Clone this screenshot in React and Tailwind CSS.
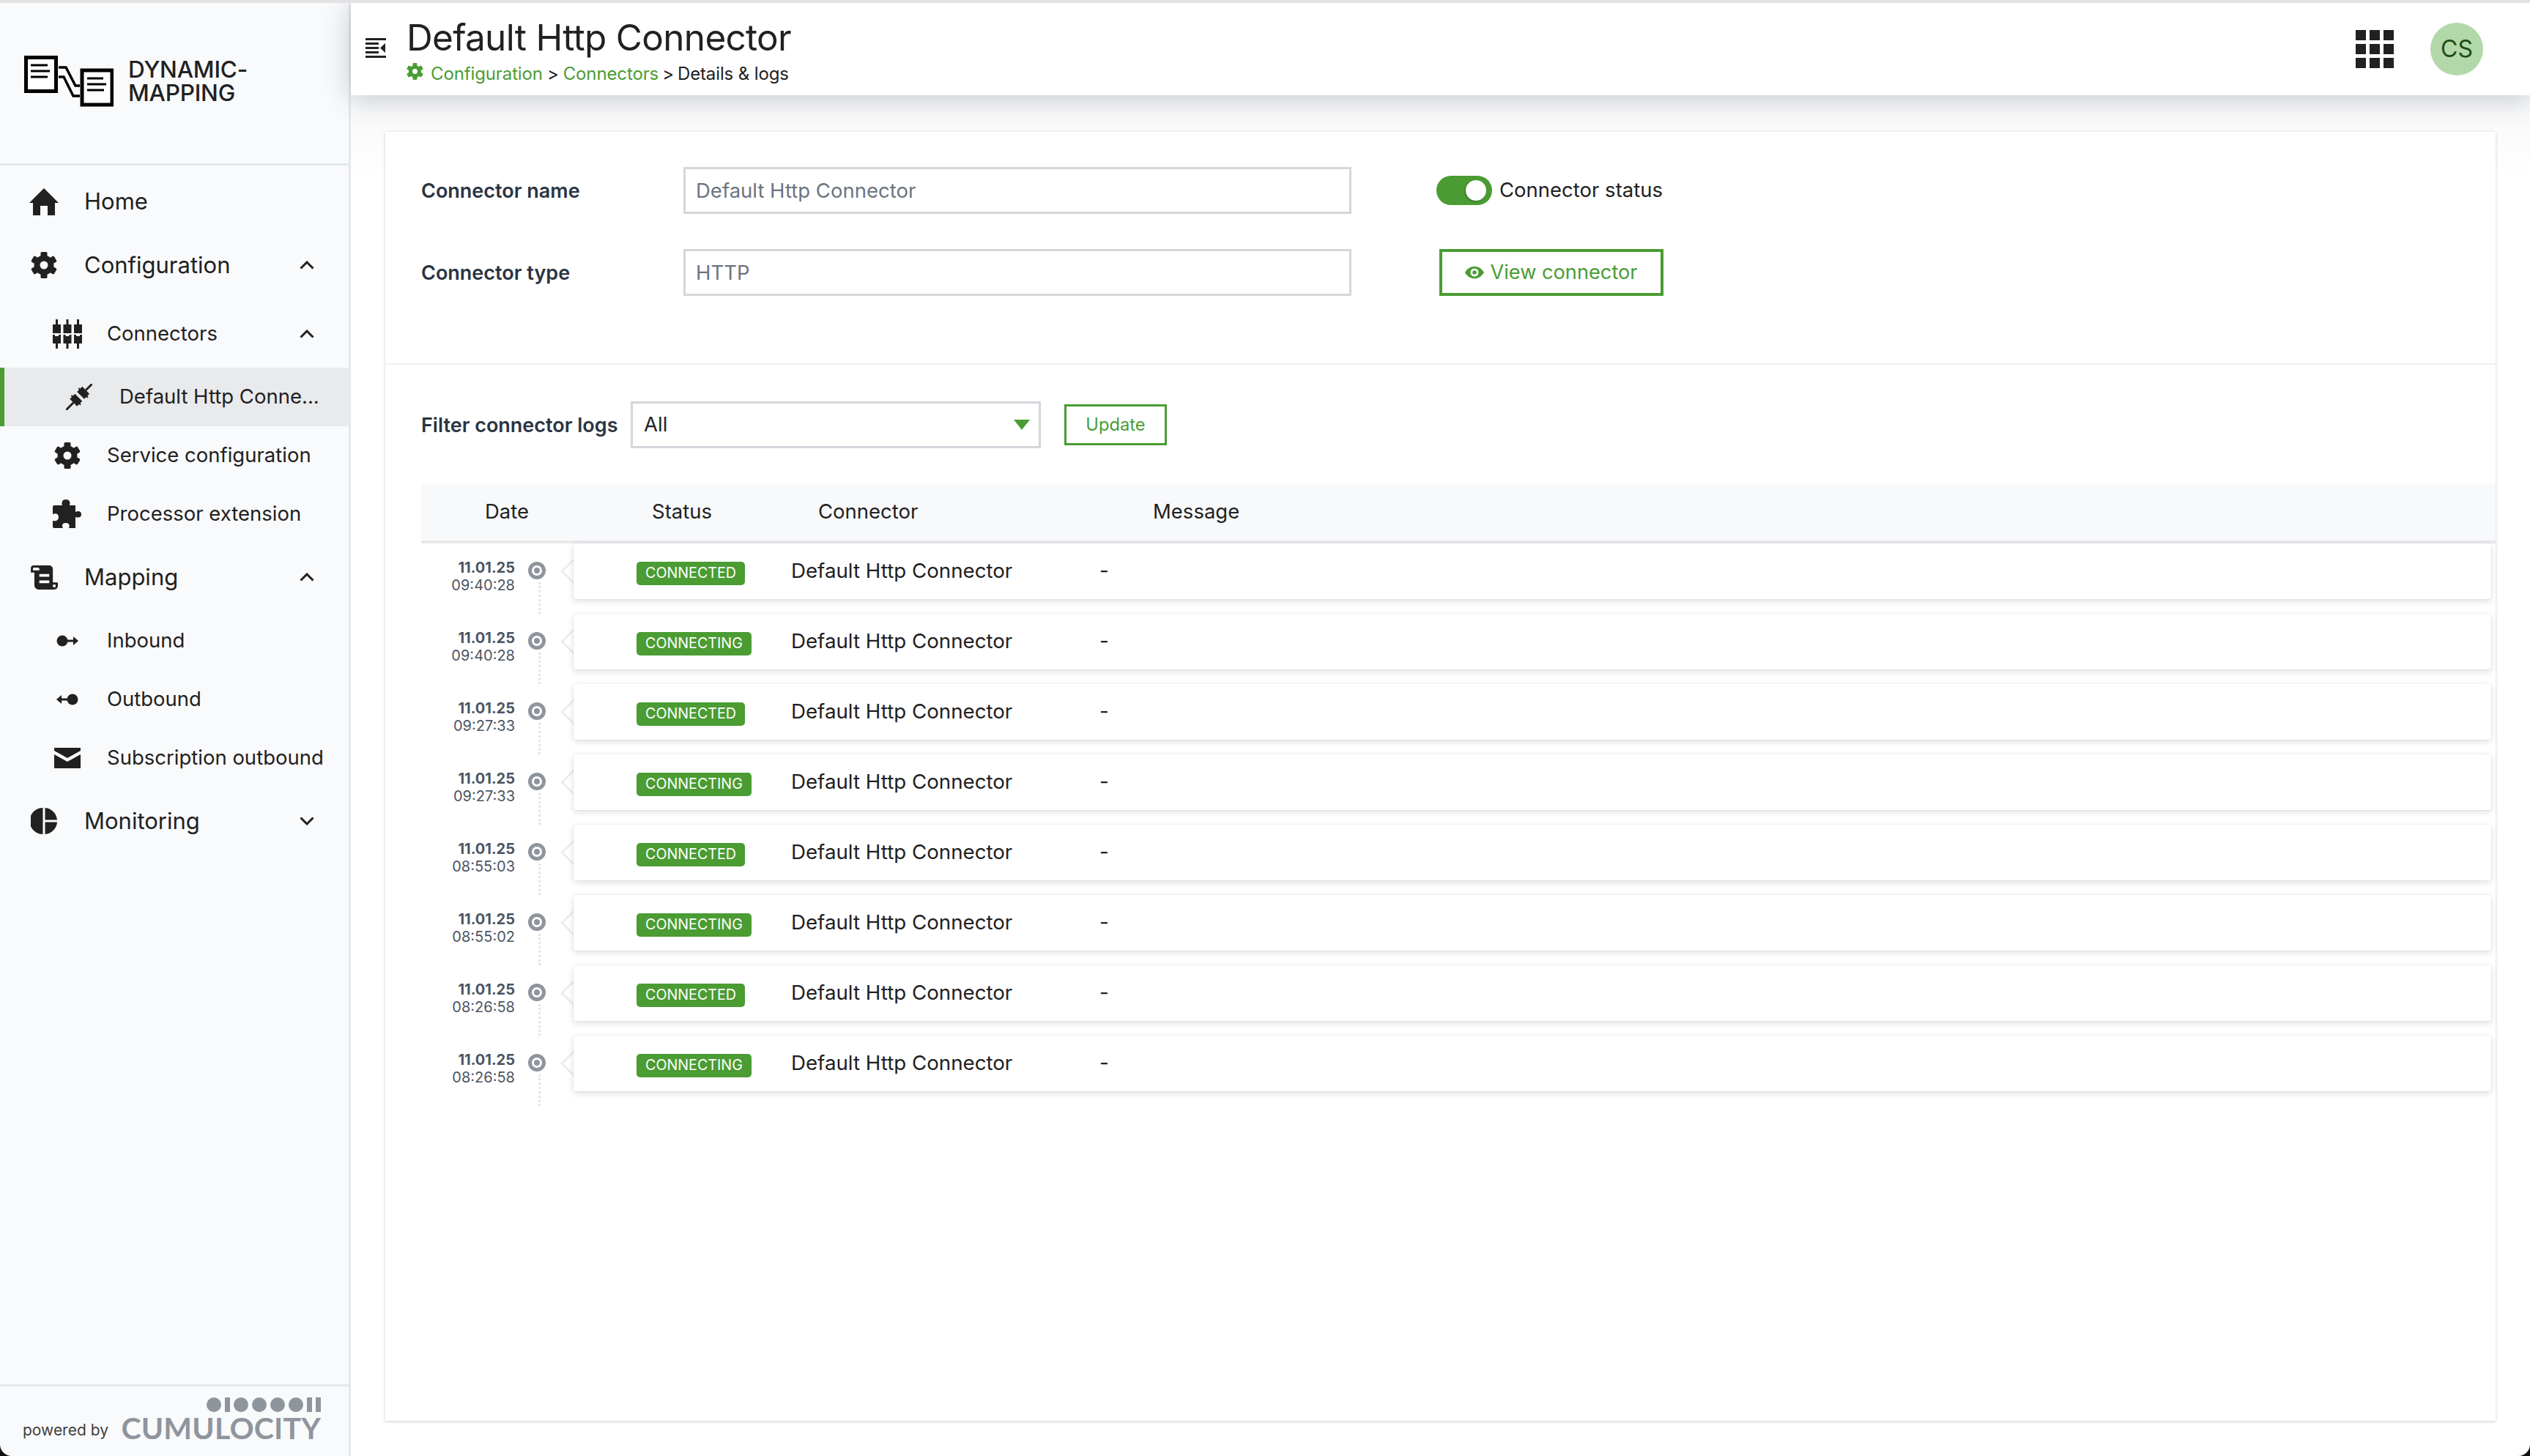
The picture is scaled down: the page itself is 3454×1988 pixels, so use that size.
function Gear({ className }) {
  return (
    <svg viewBox="0 0 36 36" className={className} fill="currentColor">
      <circle cx="18" cy="18" r="9.5" fill="none" stroke="currentColor" strokeWidth="8" />
      {[0, 60, 120, 180, 240, 300].map((a) => (
        <rect key={a} x="13.5" y="0" width="9" height="8" rx="1.5" transform={`rotate(${a} 18 18)`} />
      ))}
    </svg>
  );
}
function Home({ className }) {
  return (
    <svg viewBox="0 0 40 37" className={className} fill="currentColor">
      <path d="M20 0 L40 20 H35 V37 H25 V24 H15 V37 H5 V20 H0 Z" />
    </svg>
  );
}
function Chevron({ up }) {
  return (
    <svg viewBox="0 0 20 12" className="w-[20px] h-[12px] shrink-0" fill="none" stroke="#212121" strokeWidth="3">
      <path d={up ? "M1.5 10.5 L10 2 L18.5 10.5" : "M1.5 1.5 L10 10 L18.5 1.5"} />
    </svg>
  );
}
function Connectors({ className }) {
  return (
    <svg viewBox="0 0 40 40" className={className} fill="currentColor">
      {[0, 14.5, 29].map((x) => (
        <g key={x} transform={`translate(${x} 0)`}>
          <rect x="4" y="0" width="3" height="8" />
          <rect x="0" y="7" width="11" height="12" />
          <path d="M0 21 H3 V23 H8 V21 H11 V33 H0 Z" />
          <rect x="4" y="32" width="3" height="8" />
        </g>
      ))}
    </svg>
  );
}
function Plug({ className }) {
  return (
    <svg viewBox="0 0 36 36" className={className} fill="currentColor">
      <g transform="rotate(45 18 18)">
        <rect x="16.5" y="-7" width="3" height="12" />
        <path d="M11 5 H25 V9 H27 V11 H25 V15 H11 V11 H9 V9 H11 Z" />
        <path d="M11 19 H25 V23 H27 V25 H25 V29 H11 V25 H9 V23 H11 Z" />
        <rect x="16.5" y="29" width="3" height="14" />
      </g>
    </svg>
  );
}
function Puzzle({ className }) {
  return (
    <svg viewBox="0 0 40 40" className={className} fill="currentColor">
      <path d="M2 8 H13 C12 5 12 0 18 0 C24 0 24 5 23 8 H31 V17 C35 15 39 16 39 20 C39 25 35 25 31 24 V39 H22 C24 35 22 32 18 32 C13 32 12 35 14 39 H2 A2 2 0 0 1 0 37 V29 C5 30 8 28 8 24 C8 20 5 18 0 20 V10 A2 2 0 0 1 2 8 Z" />
    </svg>
  );
}
function Scroll({ className }) {
  return (
    <svg viewBox="0 0 38 34" className={className} fill="currentColor">
      <path fillRule="evenodd" d="M4 0 H26 A5 5 0 0 1 31 5 V24 H38 V29 A5 5 0 0 1 33 34 H11 A6 6 0 0 1 5 28 V10 H0 V4 A4 4 0 0 1 4 0 Z M3 4 V7 H12 V5 A2 2 0 0 0 10 3 H4 Z M12 12 V16 H26 V12 Z M12 21 V25 H26 V21 Z M31 27 V29 A2 2 0 0 0 35 29 V27 Z" />
    </svg>
  );
}
function Pie({ className }) {
  return (
    <svg viewBox="0 0 36 36" className={className} fill="currentColor">
      <path d="M16.5 0 V36 A18 18 0 0 1 16.5 0 Z" />
      <path d="M19.5 0 A18 18 0 0 1 36 16.5 H19.5 Z" />
      <path d="M19.5 19.5 H36 A18 18 0 0 1 19.5 36 Z" />
    </svg>
  );
}
function Inbound({ className, flip }) {
  return (
    <svg viewBox="0 0 30 16" className={className} fill="currentColor" style={flip ? { transform: "scaleX(-1)" } : undefined}>
      <circle cx="8" cy="8" r="7.5" />
      <rect x="14" y="6.5" width="12" height="3" />
      <path d="M23 2 L30 8 L23 14 Z" />
    </svg>
  );
}
function Mail({ className }) {
  return (
    <svg viewBox="0 0 36 28" className={className} fill="currentColor">
      <path d="M0 0 H36 V4 L18 14 L0 4 Z" />
      <path d="M0 9 L18 19 L36 9 V28 H0 Z" />
    </svg>
  );
}
function Logo() {
  return (
    <svg viewBox="0 0 122 70" className="w-[122px] h-[70px] shrink-0" fill="none" stroke="#000">
      <rect x="2.5" y="2.5" width="41" height="46" strokeWidth="5" fill="#fff" />
      <path d="M9 13 H32 M9 21 H35 M9 29 H32" strokeWidth="3" />
      <rect x="79" y="20" width="41" height="47" strokeWidth="5" fill="#fff" />
      <path d="M86 31 H108 M86 39 H112 M86 47 H109" strokeWidth="3" />
      <path d="M47 16 H57 L70 41 H76 M47 29 H54 L67 55 H76" strokeWidth="3.5" />
    </svg>
  );
}
function CumulocityDots() {
  return (
    <svg viewBox="0 0 156 20" className="w-[156px] h-[20px]" fill="#8e959d">
      <circle cx="10" cy="10" r="10" />
      <rect x="25" y="0" width="7" height="20" />
      <circle cx="47" cy="10" r="10" />
      <circle cx="72" cy="10" r="10" />
      <circle cx="97" cy="10" r="10" />
      <circle cx="122" cy="10" r="10" />
      <rect x="137" y="0" width="7" height="20" />
      <rect x="149" y="0" width="7" height="20" />
    </svg>
  );
}

function NavRow({ h, icon, label, chevron, sub, active, extra = "" }) {
  return (
    <div
      className={`flex items-center shrink-0 ${chevron ? "pr-[47px]" : "pr-[6px]"} ${h} ${extra} ${active ? "bg-[#e9eaec] border-l-[6px] border-[#4a9c33]" : ""}`}
    >
      <div className={`flex justify-center shrink-0 ${sub ? (active ? "w-[157px] pl-[84px] pr-[37px]" : "w-[146px] pl-[72px] pr-[34px]") : "w-[115px] pl-[40px] pr-[35px]"}`}>
        {icon}
      </div>
      <span className={`flex-1 whitespace-nowrap ${sub ? "text-[27.5px]" : "text-[31px]"} text-[#212121]`}>{label}</span>
      {chevron && <Chevron up={chevron === "up"} />}
    </div>
  );
}

function Sidebar() {
  const lg = "w-[36px] h-[36px]";
  return (
    <aside className="w-[479px] shrink-0 bg-[#f9fafc] border-r-[3px] border-[#e6e7e9] flex flex-col text-[#212121]">
      <div className="h-[222px] border-b-[3px] border-[#e6e7e9] shrink-0 flex items-center pl-[33px] gap-[20px] pb-[6px]">
        <Logo />
        <div className="text-[31.5px] leading-[32px] font-medium text-[#212121] tracking-[-0.2px]">
          DYNAMIC-<br />MAPPING
        </div>
      </div>
      <div className="h-[7px] shrink-0" />
      <NavRow h="h-[84px]" icon={<Home className="w-[40px] h-[37px]" />} label="Home" />
      <NavRow h="h-[90px]" icon={<Gear className={lg} />} label="Configuration" chevron="up" />
      <NavRow h="h-[95px]" extra="pt-[3px]" sub icon={<Connectors className="w-[40px] h-[40px]" />} label="Connectors" chevron="up" />
      <NavRow h="h-[80px]" sub active icon={<Plug className="w-[36px] h-[36px]" />} label="Default Http Conne..." />
      <NavRow h="h-[80px]" sub icon={<Gear className={lg} />} label="Service configuration" />
      <NavRow h="h-[80px]" sub icon={<Puzzle className="w-[40px] h-[40px]" />} label="Processor extension" />
      <NavRow h="h-[92px]" icon={<Scroll className="w-[37px] h-[33px]" />} label="Mapping" chevron="up" />
      <NavRow h="h-[81px]" sub icon={<Inbound className="w-[30px] h-[16px]" />} label="Inbound" />
      <NavRow h="h-[80px]" sub icon={<Inbound flip className="w-[30px] h-[16px]" />} label="Outbound" />
      <NavRow h="h-[80px]" sub icon={<Mail className="w-[36px] h-[28px]" />} label="Subscription outbound" />
      <NavRow h="h-[92px]" icon={<Pie className={lg} />} label="Monitoring" chevron="down" />
      <div className="flex-1" />
      <div className="h-[98px] border-t-[3px] border-[#e6e7e9] shrink-0 pl-[31px] pr-[38px] flex items-end justify-between pb-[22px]">
        <span className="text-[21px] leading-[26px] text-[#3f3f3f] whitespace-nowrap">powered by</span>
        <div className="flex flex-col items-end gap-[6px]">
          <CumulocityDots />
          <span className="text-[41px] leading-[32px] font-bold text-[#8e959d] tracking-[0.2px] font-['Lato',sans-serif]">CUMULOCITY</span>
        </div>
      </div>
    </aside>
  );
}

function Header() {
  return (
    <header className="h-[126px] shrink-0 bg-white shadow-[0_4px_36px_rgba(60,70,90,0.28)] relative z-10 flex items-center pr-[64px]">
      <div className="w-[76px] pl-[20px] shrink-0 -mt-[5px]">
        <svg viewBox="0 0 28 28" className="w-[28px] h-[28px]" fill="#212121">
          <rect x="0" y="1" width="28" height="3" />
          <rect x="0" y="7" width="18" height="3" />
          <rect x="0" y="13" width="18" height="3" />
          <rect x="0" y="19" width="18" height="3" />
          <rect x="0" y="25" width="28" height="3" />
          <path d="M27 8 V21 L20 14.5 Z" />
        </svg>
      </div>
      <div className="flex-1 flex flex-col pt-[5px]">
        <h1 className="text-[49.5px] leading-[58px] text-[#212121] font-normal tracking-[-0.7px]">Default Http Connector</h1>
        <div className="flex items-center text-[24px] leading-[34px] mt-[4px] text-[#212121] tracking-[-0.12px]">
          <Gear className="w-[23px] h-[23px] text-[#4a9c33] mr-[10px] mb-[6px]" />
          <span className="text-[#4a9c33]">Configuration</span>
          <span className="mx-[6px]">&gt;</span>
          <span className="text-[#4a9c33]">Connectors</span>
          <span className="mx-[5px]">&gt;</span>
          <span>Details &amp; logs</span>
        </div>
      </div>
      <svg viewBox="0 0 52 52" className="w-[52px] h-[52px] mr-[50px]" fill="#212121">
        {[0, 19, 38].flatMap((y) => [0, 19, 38].map((x) => <rect key={`${x}-${y}`} x={x} y={y} width="14" height="14" />))}
      </svg>
      <div className="w-[72px] h-[72px] rounded-full bg-[#b2d8aa] text-[#1e4d14] flex items-center justify-center text-[32px]">CS</div>
    </header>
  );
}

function Row({ date, time, status }) {
  return (
    <div className="h-[96px] flex">
      <div className="w-[128px] shrink-0 text-right text-[#4b5563] pt-[21px] text-[20px] leading-[24px]">
        <div className="font-bold">{date}</div>
        <div>{time}</div>
      </div>
      <div className="w-[80px] shrink-0 relative">
        <div className="absolute left-[18px] top-[25px] w-[24px] h-[24px] rounded-full border-[5px] border-[#8e959d] bg-white flex items-center justify-center">
          <div className="w-[8px] h-[8px] rounded-full bg-[#8e959d]" />
        </div>
        <div className="absolute left-[32px] top-[53px] h-[43px] border-l-[3px] border-dotted border-[#e3e4e6]" />
        <div className="absolute left-[68px] top-[24px] w-[28px] h-[28px] rotate-45 bg-white border-l-[3px] border-b-[3px] border-[#eceded]" />
      </div>
      <div className="flex-1 mr-[6px] h-[76px] bg-white rounded-[4px] shadow-[0_3px_8px_rgba(50,60,70,0.16),0_0_2px_rgba(50,60,70,0.12)] flex items-center relative text-[27.7px] text-[#212121]">
        <div className="w-[86px] shrink-0" />
        <div className="w-[211px] shrink-0">
          <span className="inline-flex items-center h-[32px] px-[12px] rounded-[5px] bg-[#4a9c33] text-white text-[19.7px] mt-[4px]">{status}</span>
        </div>
        <div className="w-[421px] shrink-0 -mt-[1px]">Default Http Connector</div>
        <div className="-mt-[1px]">-</div>
      </div>
    </div>
  );
}

const rows = [
  ["09:40:28", "CONNECTED"],
  ["09:40:28", "CONNECTING"],
  ["09:27:33", "CONNECTED"],
  ["09:27:33", "CONNECTING"],
  ["08:55:03", "CONNECTED"],
  ["08:55:02", "CONNECTING"],
  ["08:26:58", "CONNECTED"],
  ["08:26:58", "CONNECTING"],
];

const labelCls = "text-[27px] font-semibold text-[#2a3442] shrink-0 whitespace-nowrap pt-[2px]";
const inputCls = "w-[912px] h-[64px] border-[3px] border-[#d3d6da] px-[14px] text-[27.5px] text-[#6b7480] outline-none shrink-0";

export default function App() {
  return (
    <div className="w-[3454px] h-[1988px] overflow-hidden bg-white flex flex-col border-t-[4px] border-[#e2e2e2] relative font-['Inter',sans-serif]">
      <div className="flex flex-1 min-h-0">
        <Sidebar />
        <main className="flex-1 min-w-0 flex flex-col bg-white">
          <Header />
          <div className="flex-1 min-h-0 pl-[47px] pr-[47px] pt-[50px] pb-[48px] bg-gradient-to-b from-[#f7f8f9] to-white to-[6%]">
            <div className="h-full bg-white shadow-[0_1px_4px_rgba(60,80,100,0.28)] flex flex-col">
              <div className="h-[318px] shrink-0 border-b-[2px] border-[#f0f0f1] pl-[49px] pt-[48px] flex flex-col gap-[48px]">
                <div className="flex items-center h-[64px]">
                  <label className={`w-[358px] ${labelCls}`}>Connector name</label>
                  <input readOnly value="Default Http Connector" className={inputCls} />
                  <div className="flex items-center shrink-0 ml-[116px]">
                    <div className="w-[76px] h-[40px] rounded-full bg-[#4a9c33] relative shrink-0">
                      <div className="absolute right-[8px] top-[6px] w-[28px] h-[28px] rounded-full bg-white shadow-[-1px_1px_3px_rgba(0,0,0,0.3)]" />
                    </div>
                    <span className="ml-[10px] text-[27.5px] text-[#212121] whitespace-nowrap">Connector status</span>
                  </div>
                </div>
                <div className="flex items-center h-[64px]">
                  <label className={`w-[358px] ${labelCls}`}>Connector type</label>
                  <input readOnly value="HTTP" className={inputCls} />
                  <button className="ml-[120px] w-[306px] h-[64px] border-[4px] border-[#4a9c33] text-[#4a9c33] text-[27.2px] flex items-center justify-center gap-[8px] shrink-0">
                    <svg viewBox="0 0 28 18" className="w-[26px] h-[18px]" fill="#4a9c33">
                      <path fillRule="evenodd" d="M14 0 C21 0 26 5 28 9 C26 13 21 18 14 18 C7 18 2 13 0 9 C2 5 7 0 14 0 Z M14 3 A6 6 0 1 0 14 15 A6 6 0 1 0 14 3 Z M14 6 A3 3 0 1 1 14 12 A3 3 0 1 1 14 6 Z" />
                    </svg>
                    View connector
                  </button>
                </div>
              </div>
              <div className="pl-[49px] flex flex-col flex-1 min-h-0">
                <div className="flex items-center h-[64px] mt-[50px] shrink-0">
                  <label className={`w-[286px] ${labelCls}`}>Filter connector logs</label>
                  <div className="w-[560px] h-[64px] border-[3px] border-[#d3d6da] flex items-center justify-between pl-[15px] pr-[12px] text-[27.5px] text-[#212121] shrink-0">
                    All
                    <svg viewBox="0 0 22 14" className="w-[22px] h-[14px]" fill="#4a9c33"><path d="M0 0 H22 L11 14 Z" /></svg>
                  </div>
                  <button className="ml-[32px] w-[140px] h-[56px] border-[3px] border-[#4a9c33] text-[#4a9c33] text-[23.7px] shrink-0">Update</button>
                </div>
                <div className="h-[82px] mt-[48px] shrink-0 bg-[#f8f9fb] border-b-[4px] border-[#e8e9eb] flex items-center text-[27.5px] text-[#212121] pl-[87px]">
                  <span className="w-[228px]">Date</span>
                  <span className="w-[227px]">Status</span>
                  <span className="w-[457px]">Connector</span>
                  <span>Message</span>
                </div>
                <div className="flex flex-col">
                  {rows.map(([t, s], i) => (
                    <Row key={i} date="11.01.25" time={t} status={s} />
                  ))}
                </div>
              </div>
            </div>
          </div>
        </main>
      </div>
      <svg viewBox="0 0 16 16" className="absolute left-0 bottom-0 w-[16px] h-[16px]" fill="#111"><path d="M0 0 A16 16 0 0 0 16 16 H0 Z" /></svg>
      <svg viewBox="0 0 16 16" className="absolute right-0 bottom-0 w-[16px] h-[16px]" fill="#111"><path d="M16 0 A16 16 0 0 1 0 16 H16 Z" /></svg>
    </div>
  );
}
